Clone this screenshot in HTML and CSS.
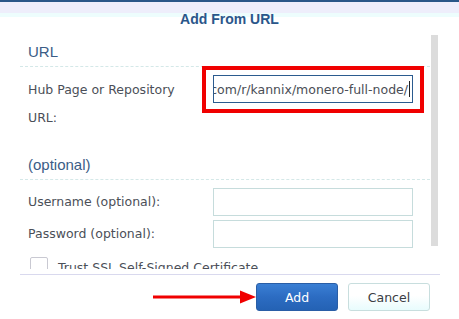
FILE: index.html
```html
<!DOCTYPE html>
<html lang="en">
<head>
    <meta charset="UTF-8">
    <title>Add From URL</title>
    <link rel="stylesheet" href="styles.css">
</head>
<body>
    <div class="dialog">
        <header class="dialog-title">Add From URL</header>

        <div class="dialog-body">
            <div class="content">
                <h2 class="section-title">URL</h2>
                <div class="form-row url-row">
                    <label class="field-label">Hub Page or Repository URL:</label>
                    <div class="highlight">
                        <div class="text-field url-field">
                            <span>https://hub.docker.com/r/kannix/monero-full-node/</span><span class="caret"></span>
                        </div>
                    </div>
                </div>

                <h2 class="section-title">(optional)</h2>
                <div class="form-row">
                    <label class="field-label">Username (optional):</label>
                    <div class="text-field plain"></div>
                </div>
                <div class="form-row">
                    <label class="field-label">Password (optional):</label>
                    <div class="text-field plain"></div>
                </div>
                <div class="check-row">
                    <span class="checkbox"></span>
                    <span class="check-label">Trust SSL Self-Signed Certificate</span>
                </div>
            </div>
            <div class="scrollbar"></div>
        </div>

        <footer class="dialog-footer">
            <svg class="arrow" width="103" height="14" viewBox="0 0 103 14">
                <line x1="0" y1="7" x2="89" y2="7" stroke="#f00000" stroke-width="3"/>
                <polygon points="87,0.5 103,7 87,13.5" fill="#f00000"/>
            </svg>
            <button class="btn btn-primary">Add</button>
            <button class="btn btn-default">Cancel</button>
        </footer>
    </div>
</body>
</html>
```

FILE: styles.css
```css
body {
    margin: 0;
    padding: 0;
    font-family: 'DejaVu Sans', Verdana, sans-serif;
    font-size: 12.5px;
    background: #ffffff;
    color: #4b4f58;
}

.dialog {
    width: 459px;
    height: 319px;
    overflow: hidden;
}

.dialog-title {
    height: 30px;
    line-height: 38px;
    text-align: center;
    font-family: 'Liberation Sans', Arial, sans-serif;
    font-weight: 700;
    font-size: 14px;
    color: #2a568a;
    background: linear-gradient(#2a5788 0, #2a5788 2px, #eeeefb 2px, #eeeefb 13px, #edfdfd 13px, #edfdfd 17px, #ffffff 17px);
}

.dialog-body {
    display: flex;
    height: 239px;
    overflow: hidden;
    padding-left: 20px;
}

.content {
    width: 410px;
    flex-shrink: 0;
}

.scrollbar {
    width: 7px;
    height: 211px;
    margin: 5px 0 0 1px;
    background: #dcdcdc;
}

.section-title {
    margin: 12px 0 0;
    padding: 0 0 4px 8px;
    font-family: 'Liberation Sans', Arial, sans-serif;
    font-size: 15px;
    font-weight: 400;
    line-height: 20px;
    color: #3b5d86;
    border-bottom: 1px dashed #d4e8e8;
}

.section-title + .form-row {
    margin-top: 8px;
}

.form-row {
    display: flex;
    padding-left: 8px;
    margin-bottom: 4px;
}

.field-label {
    width: 185px;
    flex-shrink: 0;
    line-height: 28px;
}

.url-row {
    margin-bottom: 0;
}

.url-row .field-label {
    width: 174px;
    margin-top: 1px;
    padding-right: 10px;
    box-sizing: border-box;
}

.url-row + .section-title {
    margin-top: 23px;
}

.highlight {
    margin-top: -9px;
    padding: 5px 7px 6px 7px;
    border: 4px solid #f00000;
    align-self: flex-start;
}

.text-field {
    box-sizing: border-box;
    width: 200px;
    height: 28px;
    background: #ffffff;
}

.plain {
    border: 1px solid #c6dcdc;
}

.url-field {
    display: flex;
    justify-content: flex-end;
    align-items: center;
    overflow: hidden;
    white-space: nowrap;
    padding-right: 2px;
    border: 1px solid #2b5b8f;
    color: #4a4e56;
}

.url-field span {
    flex-shrink: 0;
}

.caret {
    width: 1px;
    height: 16px;
    margin-left: 1px;
    background: #222222;
}

.check-row {
    display: flex;
    align-items: center;
    margin-top: 9px;
    padding-left: 10px;
}

.checkbox {
    box-sizing: border-box;
    width: 18px;
    height: 18px;
    border: 1px solid #c9c9d2;
    border-radius: 2px;
    margin-right: 10px;
}

.check-label {
    margin-top: 2px;
}

.dialog-footer {
    display: flex;
    justify-content: flex-end;
    align-items: center;
    margin: 5px 19px 0 20px;
    padding: 8px 10px 0 0;
    border-top: 1px solid #d9d9ee;
}

.arrow {
    display: block;
}

.btn {
    box-sizing: border-box;
    width: 82px;
    height: 28px;
    border-radius: 3px;
    font-family: 'DejaVu Sans', Verdana, sans-serif;
    font-size: 12.5px;
    padding: 0;
}

.btn-primary {
    color: #ffffff;
    border: 1px solid #2a5ea6;
    background: linear-gradient(#3a7fd4, #2c6cc2 50%, #2462b4);
}

.btn-default {
    margin-left: 10px;
    color: #3a3d44;
    border: 1px solid #c8dede;
    background: linear-gradient(#ffffff, #ffffff 45%, #e8fcfd);
}
```
